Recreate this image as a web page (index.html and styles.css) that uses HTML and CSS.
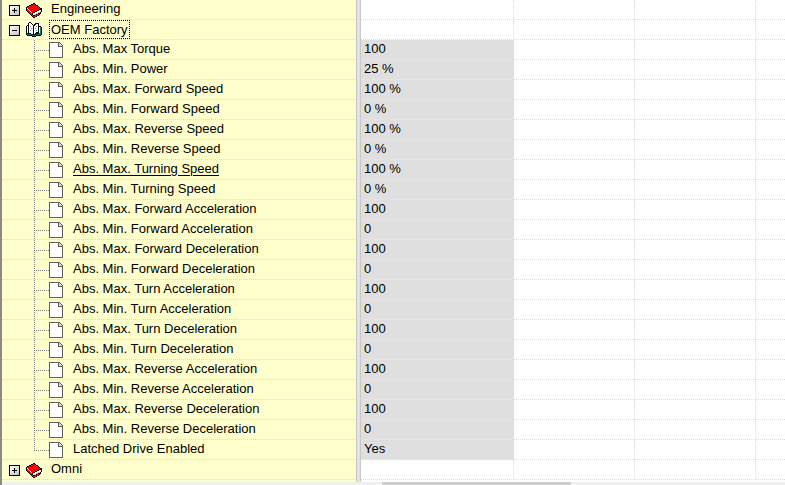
FILE: index.html
```html
<!DOCTYPE html>
<html lang="en">
<head>
    <meta charset="UTF-8">
    <meta name="viewport" content="width=device-width, initial-scale=1.0">
    <title>Controller Parameters</title>
    <link rel="stylesheet" href="styles.css">
</head>
<body>
    <svg class="sprites" aria-hidden="true">
        <symbol id="book" viewBox="0 -1 16 16">
            <path d="M7 0H9V1H10V2H12V3H13V4H14V5H16V9H15V11H14V12H13V13H11V14H9V15H7V14H6V13H5V12H4V11H3V10H2V9H1V8H0V4H1V3H3V2H5V1H7Z" fill="#000"/>
            <path d="M7 1H9V2H10V3H12V4H13V5H14V6H13V7H11V8H9V9H7V10H6V9H5V8H4V7H3V6H2V5H1V4H3V3H5V2H7Z" fill="#f00"/>
            <path d="M1 6H2V7H3V8H4V9H5V10H6V12H7V13H9V12H11V11H13V12H12V13H10V14H7V13H6V12H5V11H4V10H3V9H2V8H1Z" fill="#f00"/>
            <path d="M1 5H2V6H3V7H4V8H5V9H6V10H5V9H4V8H3V7H2V6H1ZM13 7H15V8H14V9H13V10H11V11H9V12H7V10H9V9H11V8H13Z" fill="#fff"/>
            <path d="M14 8H15V9H14V10H12V11H10V12H8V11H10V10H12V9H14Z" fill="#c0c0c0"/>
        </symbol>
        <symbol id="open-book" viewBox="0 0 16 16">
            <path d="M0 4H1V3H2V1H3V0H5V1H6V2H7V3H8V2H9V1H13V4H15V5H16V13H15V14H10V15H6V14H1V13H0Z" fill="#000"/>
            <path d="M3 1H5V2H6V3H7V12H5V11H3Z" fill="#fff"/>
            <path d="M9 3H10V2H12V10H10V11H9V12H8V4H9Z" fill="#fff"/>
            <path d="M1 4H2V11H1ZM13 5H14V11H13Z" fill="#fff"/>
            <path d="M4 4H5V5H4ZM5 6H6V7H5ZM4 8H5V9H4ZM10 4H11V5H10ZM9 6H10V7H9ZM10 8H11V9H10Z" fill="#808080"/>
            <path d="M14 5H15V13H10V14H6V13H1V12H5V13H10V12H13V11H14Z" fill="#008080"/>
        </symbol>
        <symbol id="page" viewBox="0 0 14 16">
            <path d="M0 0H10L14 4V16H0Z" fill="#606060"/>
            <path d="M1 1H9V5H13V15H1Z" fill="#fff"/>
            <path d="M10 1L13 4H10Z" fill="#d8d8d8"/>
        </symbol>
    </svg>

    <main class="editor">
        <div class="panes">
            <ul class="tree">
                <li class="row"><button class="toggle plus" aria-label="Expand Engineering"></button><svg class="book"><use href="#book"/></svg><span class="label">Engineering</span></li>
                <li class="row"><button class="toggle" aria-label="Collapse OEM Factory"></button><svg class="book"><use href="#open-book"/></svg><span class="label focused">OEM Factory</span></li>
                <li>
                    <ul class="branch">
                        <li class="row"><svg class="page"><use href="#page"/></svg><span class="label">Abs. Max Torque</span></li>
                        <li class="row"><svg class="page"><use href="#page"/></svg><span class="label">Abs. Min. Power</span></li>
                        <li class="row"><svg class="page"><use href="#page"/></svg><span class="label">Abs. Max. Forward Speed</span></li>
                        <li class="row"><svg class="page"><use href="#page"/></svg><span class="label">Abs. Min. Forward Speed</span></li>
                        <li class="row"><svg class="page"><use href="#page"/></svg><span class="label">Abs. Max. Reverse Speed</span></li>
                        <li class="row"><svg class="page"><use href="#page"/></svg><span class="label">Abs. Min. Reverse Speed</span></li>
                        <li class="row"><svg class="page"><use href="#page"/></svg><span class="label hot">Abs. Max. Turning Speed</span></li>
                        <li class="row"><svg class="page"><use href="#page"/></svg><span class="label">Abs. Min. Turning Speed</span></li>
                        <li class="row"><svg class="page"><use href="#page"/></svg><span class="label">Abs. Max. Forward Acceleration</span></li>
                        <li class="row"><svg class="page"><use href="#page"/></svg><span class="label">Abs. Min. Forward Acceleration</span></li>
                        <li class="row"><svg class="page"><use href="#page"/></svg><span class="label">Abs. Max. Forward Deceleration</span></li>
                        <li class="row"><svg class="page"><use href="#page"/></svg><span class="label">Abs. Min. Forward Deceleration</span></li>
                        <li class="row"><svg class="page"><use href="#page"/></svg><span class="label">Abs. Max. Turn Acceleration</span></li>
                        <li class="row"><svg class="page"><use href="#page"/></svg><span class="label">Abs. Min. Turn Acceleration</span></li>
                        <li class="row"><svg class="page"><use href="#page"/></svg><span class="label">Abs. Max. Turn Deceleration</span></li>
                        <li class="row"><svg class="page"><use href="#page"/></svg><span class="label">Abs. Min. Turn Deceleration</span></li>
                        <li class="row"><svg class="page"><use href="#page"/></svg><span class="label">Abs. Max. Reverse Acceleration</span></li>
                        <li class="row"><svg class="page"><use href="#page"/></svg><span class="label">Abs. Min. Reverse Acceleration</span></li>
                        <li class="row"><svg class="page"><use href="#page"/></svg><span class="label">Abs. Max. Reverse Deceleration</span></li>
                        <li class="row"><svg class="page"><use href="#page"/></svg><span class="label">Abs. Min. Reverse Deceleration</span></li>
                        <li class="row"><svg class="page"><use href="#page"/></svg><span class="label">Latched Drive Enabled</span></li>
                    </ul>
                </li>
                <li class="row"><button class="toggle plus" aria-label="Expand Omni"></button><svg class="book"><use href="#book"/></svg><span class="label">Omni</span></li>
            </ul>
            <div class="splitter"></div>
            <div class="values">
                <table>
                    <colgroup><col class="col-value"><col class="col-extra"><col class="col-extra"><col></colgroup>
                    <tr><td></td><td></td><td></td><td></td></tr>
                    <tr><td></td><td></td><td></td><td></td></tr>
                    <tr><td class="value">100</td><td></td><td></td><td></td></tr>
                    <tr><td class="value">25 %</td><td></td><td></td><td></td></tr>
                    <tr><td class="value">100 %</td><td></td><td></td><td></td></tr>
                    <tr><td class="value">0 %</td><td></td><td></td><td></td></tr>
                    <tr><td class="value">100 %</td><td></td><td></td><td></td></tr>
                    <tr><td class="value">0 %</td><td></td><td></td><td></td></tr>
                    <tr><td class="value">100 %</td><td></td><td></td><td></td></tr>
                    <tr><td class="value">0 %</td><td></td><td></td><td></td></tr>
                    <tr><td class="value">100</td><td></td><td></td><td></td></tr>
                    <tr><td class="value">0</td><td></td><td></td><td></td></tr>
                    <tr><td class="value">100</td><td></td><td></td><td></td></tr>
                    <tr><td class="value">0</td><td></td><td></td><td></td></tr>
                    <tr><td class="value">100</td><td></td><td></td><td></td></tr>
                    <tr><td class="value">0</td><td></td><td></td><td></td></tr>
                    <tr><td class="value">100</td><td></td><td></td><td></td></tr>
                    <tr><td class="value">0</td><td></td><td></td><td></td></tr>
                    <tr><td class="value">100</td><td></td><td></td><td></td></tr>
                    <tr><td class="value">0</td><td></td><td></td><td></td></tr>
                    <tr><td class="value">100</td><td></td><td></td><td></td></tr>
                    <tr><td class="value">0</td><td></td><td></td><td></td></tr>
                    <tr><td class="value">Yes</td><td></td><td></td><td></td></tr>
                    <tr><td></td><td></td><td></td><td></td></tr>
                </table>
            </div>
        </div>
        <div class="scrollbar"><div class="thumb"></div></div>
    </main>
</body>
</html>
```

FILE: styles.css
```css
* {
    box-sizing: border-box;
}

body {
    margin: 0;
    height: 100vh;
    overflow: hidden;
    background: #fff;
    color: #000;
    font-family: "Liberation Sans", Arial, sans-serif;
    font-size: 13px;
    line-height: 17px;
}

.sprites {
    display: none;
}

.editor {
    display: flex;
    flex-direction: column;
    height: 100%;
    border-left: 2px solid #8a8a8a;
}

.panes {
    display: flex;
    flex: 1;
    min-height: 0;
}

.tree,
.branch {
    margin: 0;
    padding: 0;
    list-style: none;
}

.tree {
    flex: 0 0 354px;
    background: #ffffcc;
}

.row {
    display: flex;
    align-items: center;
    height: 20px;
    padding-left: 7px;
    border-bottom: 1px dotted #dcdcc8;
    white-space: nowrap;
}

/* expand / collapse box */
.toggle {
    width: 11px;
    height: 11px;
    margin: 1px 6px 0 0;
    padding: 0;
    border: 1px solid #000;
    background:
        linear-gradient(#000, #000) center / 5px 1px no-repeat,
        linear-gradient(135deg, #fff, #c0c0c0);
}

.toggle.plus {
    background:
        linear-gradient(#000, #000) center / 5px 1px no-repeat,
        linear-gradient(#000, #000) center / 1px 5px no-repeat,
        linear-gradient(135deg, #fff, #c0c0c0);
}

.book {
    width: 16px;
    height: 16px;
    margin-right: 8px;
    shape-rendering: crispEdges;
}

.page {
    width: 14px;
    height: 16px;
    margin-right: 9px;
    shape-rendering: crispEdges;
}

.label {
    padding: 0 1px 2px;
}

.focused {
    padding-bottom: 0;
    outline: 1px dotted #000;
}

.hot {
    text-decoration: underline;
    text-underline-offset: 2px;
}

/* connector lines down to and across to each page icon */
.branch .row {
    padding-left: 32px;
}

.branch .row::before {
    content: "";
    align-self: flex-start;
    width: 14px;
    height: 10px;
    border-left: 1px dotted #808080;
    border-bottom: 1px dotted #808080;
}

.branch .row:not(:last-child) {
    background: repeating-linear-gradient(#808080 0 1px, transparent 1px 2px) 32px 0 / 1px 100% no-repeat;
}

.splitter {
    flex: 0 0 5px;
    border: solid #c8c8c8;
    border-width: 0 1px;
    background: #e3e3e3;
}

.values {
    flex: 1;
    min-width: 0;
}

table {
    width: 100%;
    table-layout: fixed;
    border-collapse: separate;
    border-spacing: 0;
}

.col-value {
    width: 153px;
}

.col-extra {
    width: 121px;
}

td {
    height: 20px;
    padding: 0 3px 2px;
    border-right: 1px dotted #dcdcdc;
    border-bottom: 1px dotted #dcdcdc;
}

td:last-child {
    border-right: none;
}

.value {
    background: #dfdfdf;
    border-right-color: #dfdfdf;
    border-bottom-color: #e8e8e8;
}

.scrollbar {
    flex: 0 0 3px;
    padding-left: 380px;
    background: #f0f0f0;
}

.thumb {
    width: 47%;
    height: 100%;
    background: #cdcdcd;
}
```
